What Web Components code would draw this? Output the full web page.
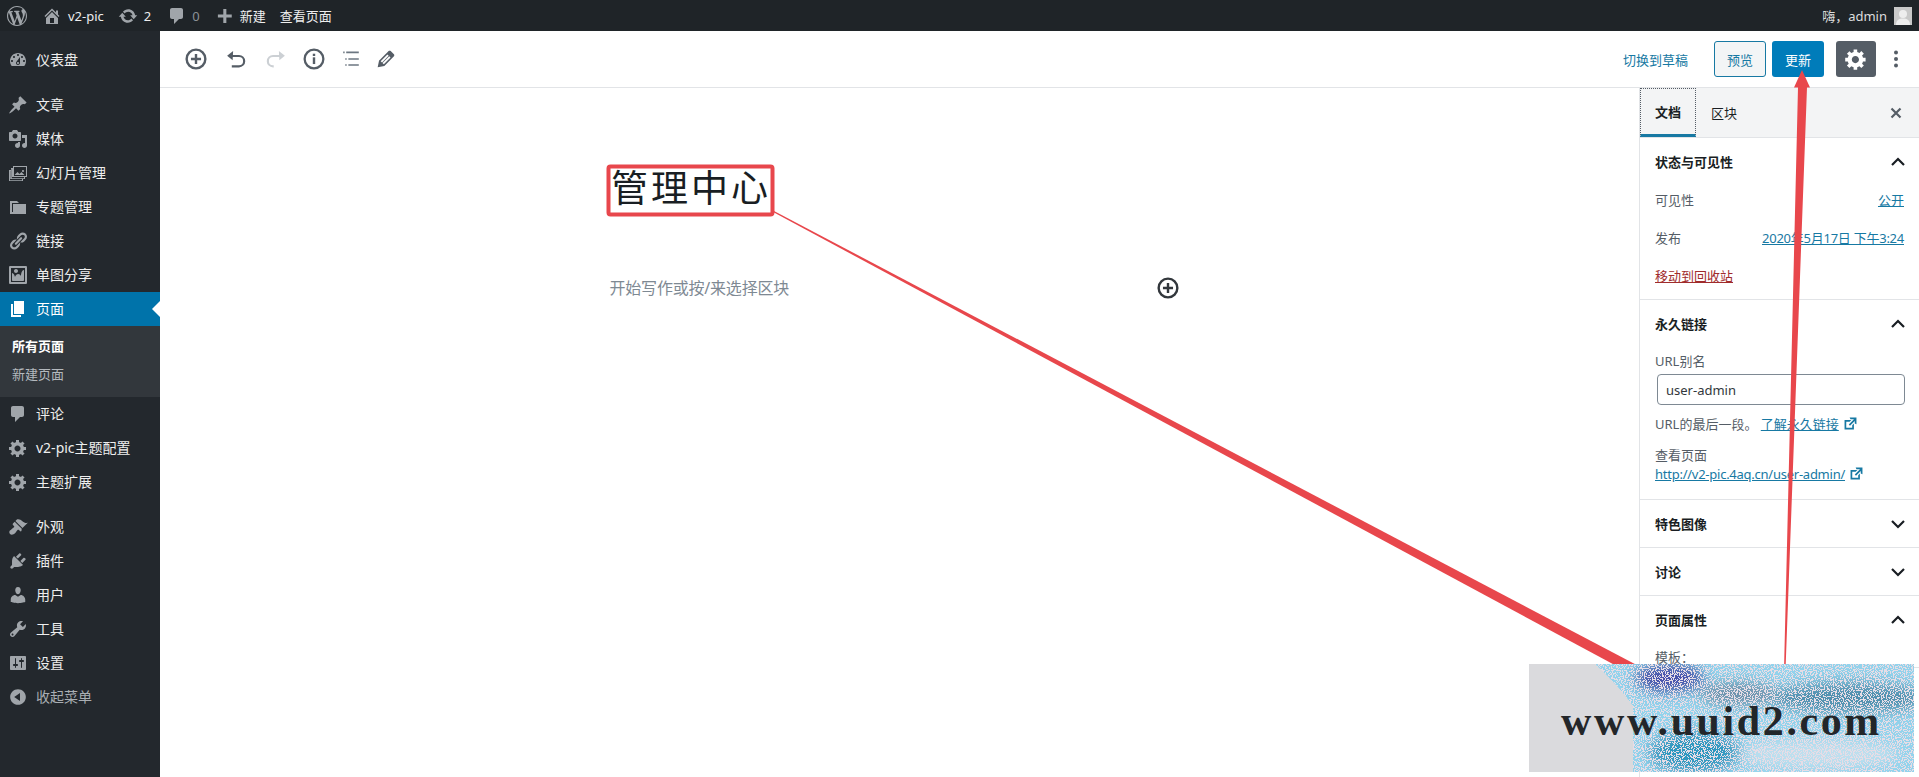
<!DOCTYPE html>
<html lang="zh-CN">
<head>
<meta charset="utf-8">
<title>编辑页面</title>
<style>
  html, body { margin: 0; height: 100%; overflow: hidden; background: #fff; }
  body {
    position: relative;
    display: flex;
    flex-direction: column;
    font: 13px "Noto Sans", "Noto Sans CJK SC", sans-serif;
  }
  .workspace { flex: 1; display: flex; min-height: 0; }
</style>
</head>
<body>
<wp-admin-bar></wp-admin-bar>
<div class="workspace">
  <wp-admin-menu></wp-admin-menu>
  <wp-editor></wp-editor>
</div>
<note-arrows></note-arrows>
<water-stamp></water-stamp>

<script>
const ICONS = {
  logo: '<path fill-rule="evenodd" d="M20 10c0-5.51-4.49-10-10-10C4.48 0 0 4.49 0 10c0 5.52 4.48 10 10 10 5.51 0 10-4.48 10-10zM7.78 15.37L4.37 6.22c.55-.02 1.17-.08 1.17-.08.5-.06.44-1.13-.06-1.11 0 0-1.45.11-2.37.11-.18 0-.37 0-.58-.01C4.12 2.69 6.87 1.02 10 1.02c2.33 0 4.45.87 6.05 2.34-.68-.11-1.65.39-1.65 1.58 0 .74.45 1.36.9 2.1.35.61.55 1.36.55 2.46 0 1.49-1.4 5-1.4 5l-3.03-8.37c.54-.02.82-.17.82-.17.5-.05.44-1.25-.06-1.22 0 0-1.44.12-2.38.12-.87 0-2.33-.12-2.33-.12-.5-.03-.56 1.2-.06 1.22l.92.08 1.26 3.41zM17.41 10c.24-.64.74-1.87.43-4.25.7 1.29 1.05 2.71 1.05 4.25 0 3.29-1.73 6.24-4.4 7.78.97-2.59 1.94-5.2 2.92-7.78zM6.1 18.09C3.12 16.65 1.11 13.53 1.11 10c0-1.3.23-2.48.72-3.59C3.25 10.3 4.67 14.2 6.1 18.09zm4.03-6.63l2.58 6.98c-.86.29-1.76.45-2.71.45-.79 0-1.57-.11-2.29-.33.81-2.38 1.62-4.74 2.42-7.1z"/>',
  home: '<path fill-rule="evenodd" d="M16 8.5l1.53 1.53-1.06 1.06L10 4.62l-6.47 6.47-1.06-1.06L10 2.5l4 4v-2h2v4zm-6-2.46l6 5.99V18H4v-5.97zM12 17v-5H8v5h4z"/>',
  update: '<path d="M10.2 3.28c3.53 0 6.43 2.61 6.92 6h2.08l-3.5 4-3.5-4h2.32c-.45-1.97-2.21-3.45-4.32-3.45-1.45 0-2.73.71-3.54 1.78L4.95 5.66C6.23 4.2 8.11 3.28 10.2 3.28zm-.4 13.44c-3.52 0-6.43-2.61-6.92-6H.8l3.5-4c1.17 1.33 2.33 2.67 3.5 4H5.48c.45 1.97 2.21 3.45 4.32 3.45 1.45 0 2.73-.71 3.54-1.78l1.71 1.95c-1.28 1.46-3.15 2.38-5.25 2.38z"/>',
  comment: '<path d="M5 2h9c1.1 0 2 .9 2 2v7c0 1.1-.9 2-2 2h-2l-5 5v-5H5c-1.1 0-2-.9-2-2V4c0-1.1.9-2 2-2z"/>',
  plus: '<path d="M17.500 8.300v3.400h-6v6h-3.400v-6h-6V8.300h6v-6h3.400v6z"/>',
  dashboard: '<path fill-rule="evenodd" d="M3.76 16h12.48c1.1-1.37 1.76-3.11 1.76-5 0-4.42-3.58-8-8-8s-8 3.58-8 8c0 1.89.66 3.63 1.76 5zM10 4c.55 0 1 .45 1 1s-.45 1-1 1-1-.45-1-1 .45-1 1-1zM6 6c.55 0 1 .45 1 1s-.45 1-1 1-1-.45-1-1 .45-1 1-1zm8 0c.55 0 1 .45 1 1s-.45 1-1 1-1-.45-1-1 .45-1 1-1zm-5.37 5.55L12 7v6c0 1.1-.9 2-2 2s-2-.9-2-2c0-.57.24-1.08.63-1.45zM4 10c.55 0 1 .45 1 1s-.45 1-1 1-1-.45-1-1 .45-1 1-1zm12 0c.55 0 1 .45 1 1s-.45 1-1 1-1-.45-1-1 .45-1 1-1zm-5 3c0-.55-.45-1-1-1s-1 .45-1 1 .45 1 1 1 1-.45 1-1z"/>',
  pin: '<path d="M10.44 3.02l1.82-1.82 6.36 6.35-1.83 1.82c-1.05-.68-2.48-.57-3.41.36l-.75.75c-.92.93-1.04 2.35-.35 3.41l-1.83 1.82-2.41-2.41-2.8 2.79c-.42.42-3.38 2.71-3.8 2.29s1.86-3.39 2.28-3.81l2.79-2.79L4.1 9.36l1.83-1.82c1.05.69 2.48.57 3.4-.36l.75-.75c.93-.92 1.05-2.35.36-3.41z"/>',
  media: '<path fill-rule="evenodd" d="M13 11V4c0-.55-.45-1-1-1h-1.67L9 1H5L3.67 3H2c-.55 0-1 .45-1 1v7c0 .55.45 1 1 1h10c.55 0 1-.45 1-1zM7 4.5c1.38 0 2.5 1.12 2.5 2.5S8.38 9.5 7 9.5 4.5 8.38 4.5 7 5.62 4.5 7 4.5zM14 6h5v10.5c0 1.38-1.12 2.5-2.5 2.5S14 17.88 14 16.5s1.12-2.5 2.5-2.5c.17 0 .34.02.5.05V9h-3V6zm-4 8.05V13h2v3.5c0 1.38-1.12 2.5-2.5 2.5S7 17.88 7 16.5 8.12 14 9.5 14c.17 0 .34.02.5.05z"/>',
  slides: '<path fill-rule="evenodd" d="M5 3h14v11h-2v2h-2v2H1V7h2V5h2V3zm13 10V4H6v9h12zm-3-4c-.55 0-1-.45-1-1s.45-1 1-1 1 .45 1 1-.45 1-1 1zm1.500 3l-3-3-2 2-2-2-3 3zM16 14H4V6H3.800v9.200H16zm-2 2H2.200V8H2v9.200h12z"/>',
  folder: '<path d="M5 7h13v10H2V4h7l2 2H4v9h1V7z"/>',
  link: '<path d="M17.74 2.76c1.68 1.69 1.68 4.41 0 6.1l-1.53 1.52c-1.12 1.12-2.7 1.47-4.14 1.09l2.62-2.61.76-.77.76-.76c.84-.84.84-2.2 0-3.04-.84-.85-2.2-.85-3.04 0l-.77.76-3.38 3.38c-.37-1.44-.02-3.02 1.1-4.14l1.52-1.53c1.69-1.68 4.42-1.68 6.1 0zM8.59 13.43l5.34-5.34c.42-.42.42-1.1 0-1.52-.44-.43-1.13-.39-1.53 0l-5.33 5.34c-.42.42-.42 1.1 0 1.52.44.43 1.13.39 1.52 0zm-.76 2.29l4.14-4.15c.38 1.44.03 3.02-1.09 4.14l-1.52 1.53c-1.69 1.68-4.41 1.68-6.1 0-1.68-1.68-1.68-4.42 0-6.1l1.53-1.52c1.12-1.12 2.7-1.47 4.14-1.1l-4.14 4.15c-.85.84-.85 2.2 0 3.05.84.84 2.2.84 3.04 0z"/>',
  image: '<path fill-rule="evenodd" d="M2.25 1h15.5c.69 0 1.25.56 1.25 1.25v15.5c0 .69-.56 1.25-1.25 1.25H2.25C1.56 19 1 18.44 1 17.75V2.25C1 1.56 1.56 1 2.25 1zM17 17V3H3v14h14zM10 6c0-1.1-.9-2-2-2s-2 .9-2 2 .9 2 2 2 2-.9 2-2zm3 5s0-6 3-6v10c0 .55-.45 1-1 1H5c-.55 0-1-.45-1-1V8c2 0 3 4 3 4s1-3 3-3 3 2 3 2z"/>',
  page: '<path d="M6 15V2h10v13H6zm-1 1h8v2H3V5h2v11z"/>',
  gear: '<path fill-rule="evenodd" d="M18 12h-2.18c-.17.7-.44 1.35-.81 1.93l1.54 1.54-2.1 2.1-1.54-1.54c-.58.36-1.23.63-1.91.79V19H8v-2.18c-.68-.16-1.33-.43-1.91-.79l-1.54 1.54-2.12-2.12 1.54-1.54c-.36-.58-.63-1.23-.79-1.91H1V9.03h2.17c.16-.7.44-1.35.8-1.94L2.43 5.55l2.1-2.1 1.54 1.54c.58-.37 1.24-.64 1.93-.81V2h3v2.18c.68.16 1.33.43 1.91.79l1.54-1.54 2.12 2.12-1.54 1.54c.36.59.64 1.24.8 1.94H18V12zm-8.5 1.5c1.66 0 3-1.34 3-3s-1.34-3-3-3-3 1.34-3 3 1.34 3 3 3z"/>',
  brush: '<path d="M14.48 11.06L7.41 3.99l1.5-1.5c.5-.56 2.3-.47 3.51.32 1.21.8 1.43 1.28 2.91 2.1 1.18.64 2.45 1.26 4.45.85zm-.71.71L6.7 4.7 4.93 6.47c-.39.39-.39 1.02 0 1.41l1.06 1.06c.39.39.39 1.03 0 1.42-.6.6-1.43 1.11-2.21 1.69-.35.26-.7.53-1.01.84C1.43 13.23.64 15.41 2 17c1.36 1.36 3.7.57 5.02-.75.31-.31.58-.66.84-1.01.58-.78 1.09-1.61 1.69-2.21.39-.39 1.03-.39 1.42 0l1.06 1.06c.39.39 1.02.39 1.41 0z"/>',
  plug: '<path d="M13.11 4.36L9.87 7.6 8 5.73l3.24-3.24c.35-.34 1.05-.2 1.56.32.52.51.66 1.21.31 1.55zm-8 1.77l.91-1.12 9.01 9.01-1.19.84c-.71.71-2.63 1.16-3.82 1.16H6.14L4.9 17.26c-.59.59-1.54.59-2.12 0-.59-.58-.59-1.53 0-2.12l1.24-1.24v-3.88c0-1.13.4-3.19 1.09-3.89zm7.26 3.97l3.24-3.24c.34-.35 1.04-.21 1.55.31.52.51.66 1.21.31 1.55l-3.24 3.25z"/>',
  user: '<path d="M10 9.25c-2.27 0-2.73-3.44-2.73-3.44C7 4.02 7.82 2 9.97 2c2.16 0 2.98 2.02 2.71 3.81 0 0-.41 3.44-2.68 3.44zm0 2.57L12.72 10c2.39 0 4.52 2.33 4.52 4.53v2.49s-3.65 1.13-7.24 1.13c-3.65 0-7.24-1.13-7.24-1.13v-2.49c0-2.25 1.94-4.48 4.47-4.48z"/>',
  tool: '<path fill-rule="evenodd" d="M16.68 9.77c-1.34 1.34-3.3 1.67-4.95.99l-5.41 6.52c-.99.99-2.59.99-3.58 0s-.99-2.59 0-3.57l6.52-5.42c-.68-1.65-.35-3.61.99-4.95 1.28-1.28 3.12-1.62 4.72-1.06l-2.89 2.89 2.82 2.82 2.86-2.87c.53 1.58.18 3.39-1.08 4.65zM3.81 16.21c.4.39 1.04.39 1.43 0 .4-.4.4-1.04 0-1.43-.39-.4-1.03-.4-1.43 0-.39.39-.39 1.03 0 1.43z"/>',
  sliders: '<path fill-rule="evenodd" d="M18 16V4c0-.55-.45-1-1-1H3c-.55 0-1 .45-1 1v12c0 .55.45 1 1 1h14c.55 0 1-.45 1-1zM8 11h1c.55 0 1 .45 1 1s-.45 1-1 1H8v1.5c0 .28-.22.5-.5.5s-.5-.22-.5-.5V13H6c-.55 0-1-.45-1-1s.45-1 1-1h1V5.5c0-.28.22-.5.5-.5s.5.22.5.5V11zm5-2h-1c-.55 0-1-.45-1-1s.45-1 1-1h1V5.5c0-.28.22-.5.5-.5s.5.22.5.5V7h1c.55 0 1 .45 1 1s-.45 1-1 1h-1v5.5c0 .28-.22.5-.5.5s-.5-.22-.5-.5V9z"/>',
  collapse: '<path fill-rule="evenodd" d="M10 2.16c4.33 0 7.84 3.51 7.84 7.84s-3.51 7.84-7.84 7.84S2.16 14.33 2.16 10 5.71 2.16 10 2.16zm2 11.72V6.12L6.18 9.97z"/>',
  external: '<path d="M9 3h8v8l-2-1V6.92l-5.6 5.59-1.41-1.41L14.08 5H10zm3 12v-3l2-2v7H3V6h8L9 8H5v7h7z"/>',
  edit: '<path fill-rule="evenodd" d="M13.89 3.39l2.71 2.72c.46.46.42 1.24.03 1.64l-8.01 8.02-5.56 1.16 1.16-5.58s7.6-7.63 7.99-8.03c.39-.39 1.22-.39 1.68.07zm-2.73 2.79l-5.59 5.61 1.11 1.11 5.54-5.65zm-2.97 8.23l5.58-5.6-1.07-1.08-5.59 5.6z"/>',
  add: '<circle cx="10" cy="10" r="7.800" fill="none" stroke="currentColor" stroke-width="2"/><path d="M10 5.800v8.400M5.800 10h8.400" stroke="currentColor" stroke-width="2" fill="none"/>',
  info: '<circle cx="10" cy="10" r="7.800" fill="none" stroke="currentColor" stroke-width="1.900"/><rect x="9" y="8.600" width="2" height="5.600"/><rect x="9" y="5.600" width="2" height="1.900"/>',
  undo: '<path d="M6 7.500h6.500a4.300 4.300 0 0 1 0 8.600H6.500" fill="none" stroke="currentColor" stroke-width="1.800"/><path d="M2.600 7.300l5-3.900-.4 7.700z"/>',
  redo: '<path d="M14 7.500H7.500a4.300 4.300 0 0 0 0 8.600h.6" fill="none" stroke="currentColor" stroke-width="1.800"/><path d="M17.400 7.300l-5-3.900.4 7.700z"/>',
  outline: '<path d="M3.500 4.500h1.200M6 4.500h10.500M5.200 10h1.200M7.800 10h8.700M5.200 15h1.200M7.800 15h8.700" fill="none" stroke="currentColor" stroke-width="1.300"/>',
  close: '<path d="M5.500 5.500l9 9M14.500 5.500l-9 9" fill="none" stroke="currentColor" stroke-width="2.200"/>',
  up: '<path d="M4 13l6-6 6 6" fill="none" stroke="currentColor" stroke-width="2.200"/>',
  down: '<path d="M4 7l6 6 6-6" fill="none" stroke="currentColor" stroke-width="2.200"/>',
  kebab: '<circle cx="10" cy="3.500" r="2"/><circle cx="10" cy="10" r="2"/><circle cx="10" cy="16.500" r="2"/>'
};

class WpIcon extends HTMLElement {
  connectedCallback() {
    const size = this.getAttribute('size') || 20;
    this.attachShadow({mode: 'open'}).innerHTML = `
      <style>
        :host { display: inline-flex; width: ${size}px; height: ${size}px; flex: none; color: inherit; }
        svg { width: 100%; height: 100%; fill: currentColor; display: block; }
      </style>
      <svg viewBox="0 0 20 20" aria-hidden="true">${ICONS[this.getAttribute('name')] || ''}</svg>`;
  }
}
customElements.define('wp-icon', WpIcon);

class WpAdminBar extends HTMLElement {
  connectedCallback() {
    this.attachShadow({mode: 'open'}).innerHTML = `
      <style>
        :host {
          display: flex;
          align-items: center;
          height: 31px;
          flex: none;
          background: #1f2428;
          color: #eee;
          font-size: 13px;
        }
        .item { display: flex; align-items: center; white-space: nowrap; }
        wp-icon { color: #a0a5aa; }
        .muted { color: #8c9196; }
        .right { margin-left: auto; padding-right: 7px; gap: 7px; color: #ddd; }
        .avatar { display: block; width: 18px; height: 18px; }
      </style>
      <div class="item" style="margin-left:7px"><wp-icon name="logo"></wp-icon></div>
      <div class="item" style="margin-left:15px"><wp-icon name="home" size="20"></wp-icon><span style="margin-left:6px">v2-pic</span></div>
      <div class="item" style="margin-left:14px"><wp-icon name="update"></wp-icon><span style="margin-left:6px">2</span></div>
      <div class="item" style="margin-left:16px"><wp-icon name="comment"></wp-icon><span class="muted" style="margin-left:5px">0</span></div>
      <div class="item" style="margin-left:16px"><wp-icon name="plus" size="18"></wp-icon><span style="margin-left:6px">新建</span></div>
      <div class="item" style="margin-left:14px">查看页面</div>
      <div class="item right">
        <span>嗨，admin</span>
        <svg class="avatar" viewBox="0 0 18 18"><rect width="18" height="18" fill="#c9c9c9"/><circle cx="9" cy="7" r="4" fill="#eee"/><path d="M2 18c0-5 3-6.500 7-6.500s7 1.500 7 6.500z" fill="#eee"/></svg>
      </div>`;
  }
}
customElements.define('wp-admin-bar', WpAdminBar);

class WpMenuItem extends HTMLElement {
  connectedCallback() {
    this.attachShadow({mode: 'open'}).innerHTML = `
      <style>
        :host {
          display: flex;
          align-items: center;
          position: relative;
          height: 34px;
          padding-left: 8px;
          gap: 8px;
          color: #eee;
          font-size: 14px;
          white-space: nowrap;
        }
        :host([active]) { background: #0073aa; color: #fff; }
        :host([active])::after {
          content: "";
          position: absolute;
          right: 0;
          top: 9px;
          border: 8px solid transparent;
          border-right-color: #fff;
          border-left-width: 0;
        }
        :host([dim]) { color: #a9aeb3; }
        .label { padding-bottom: 2px; }
        wp-icon { color: #a0a5aa; }
        :host([active]) wp-icon { color: #fff; }
      </style>
      <wp-icon name="${this.getAttribute('icon')}"></wp-icon><span class="label"><slot></slot></span>`;
  }
}
customElements.define('wp-menu-item', WpMenuItem);

class WpAdminMenu extends HTMLElement {
  connectedCallback() {
    this.attachShadow({mode: 'open'}).innerHTML = `
      <style>
        :host {
          display: block;
          width: 160px;
          flex: none;
          padding-top: 12px;
          box-sizing: border-box;
          background: #23282d;
        }
        .gap { height: 11px; }
        .sub {
          display: flex;
          flex-direction: column;
          justify-content: center;
          box-sizing: border-box;
          height: 71px;
          padding: 0 0 3px 12px;
          background: #32373c;
          color: #b4b9be;
          font-size: 13px;
          line-height: 28px;
        }
        .sub b { color: #fff; font-weight: 700; }
      </style>
      <wp-menu-item icon="dashboard">仪表盘</wp-menu-item>
      <div class="gap"></div>
      <wp-menu-item icon="pin">文章</wp-menu-item>
      <wp-menu-item icon="media">媒体</wp-menu-item>
      <wp-menu-item icon="slides">幻灯片管理</wp-menu-item>
      <wp-menu-item icon="folder">专题管理</wp-menu-item>
      <wp-menu-item icon="link">链接</wp-menu-item>
      <wp-menu-item icon="image">单图分享</wp-menu-item>
      <wp-menu-item icon="page" active>页面</wp-menu-item>
      <div class="sub"><b>所有页面</b><span>新建页面</span></div>
      <wp-menu-item icon="comment">评论</wp-menu-item>
      <wp-menu-item icon="gear">v2-pic主题配置</wp-menu-item>
      <wp-menu-item icon="gear">主题扩展</wp-menu-item>
      <div class="gap"></div>
      <wp-menu-item icon="brush">外观</wp-menu-item>
      <wp-menu-item icon="plug">插件</wp-menu-item>
      <wp-menu-item icon="user">用户</wp-menu-item>
      <wp-menu-item icon="tool">工具</wp-menu-item>
      <wp-menu-item icon="sliders">设置</wp-menu-item>
      <wp-menu-item icon="collapse" dim>收起菜单</wp-menu-item>`;
  }
}
customElements.define('wp-admin-menu', WpAdminMenu);

class EditToolbar extends HTMLElement {
  connectedCallback() {
    this.attachShadow({mode: 'open'}).innerHTML = `
      <style>
        :host {
          display: flex;
          align-items: center;
          flex: none;
          height: 56px;
          padding-left: 24px;
          border-bottom: 1px solid #e2e4e7;
          background: #fff;
          color: #555d66;
          font-size: 13px;
        }
        .tools { display: flex; align-items: center; }
        .end { margin-left: auto; display: flex; align-items: center; }
        .draft { color: #1779a3; margin-right: 26px; }
        .btn {
          display: flex;
          align-items: center;
          justify-content: center;
          box-sizing: border-box;
          width: 52px;
          height: 36px;
          border-radius: 3px;
        }
        .preview { border: 1px solid #1779a3; background: #f3f5f6; color: #1779a3; margin-right: 6px; }
        .update { background: #007cba; color: #fff; margin-right: 12px; }
        .cog { width: 40px; background: #555d66; color: #fff; margin-right: 10px; }
        .more { margin-right: 13px; color: #555d66; }
      </style>
      <div class="tools">
        <wp-icon name="add" size="24"></wp-icon>
        <wp-icon name="undo" size="24" style="margin-left:16px"></wp-icon>
        <wp-icon name="redo" size="24" style="margin-left:16px;color:#ccd0d4"></wp-icon>
        <wp-icon name="info" size="24" style="margin-left:14px"></wp-icon>
        <wp-icon name="outline" size="24" style="margin-left:13px;color:#6c7781"></wp-icon>
        <wp-icon name="edit" size="24" style="margin-left:11px"></wp-icon>
      </div>
      <div class="end">
        <span class="draft">切换到草稿</span>
        <div class="btn preview">预览</div>
        <div class="btn update">更新</div>
        <div class="btn cog"><wp-icon name="gear" size="24"></wp-icon></div>
        <wp-icon class="more" name="kebab" size="20"></wp-icon>
      </div>`;
  }
}
customElements.define('edit-toolbar', EditToolbar);

class SidePanel extends HTMLElement {
  connectedCallback() {
    const open = this.hasAttribute('open');
    this.attachShadow({mode: 'open'}).innerHTML = `
      <style>
        :host { display: block; border-bottom: 1px solid #e2e4e7; }
        header {
          display: flex;
          align-items: center;
          justify-content: space-between;
          height: 47px;
          padding: 0 11px 0 15px;
          font-weight: 700;
          color: #191e23;
        }
        wp-icon { color: #191e23; }
        .body { display: ${open ? 'block' : 'none'}; padding: 0 15px; }
      </style>
      <header>${this.getAttribute('heading')}<wp-icon name="${open ? 'up' : 'down'}"></wp-icon></header>
      <div class="body"><slot></slot></div>`;
  }
}
customElements.define('side-panel', SidePanel);

class DocSidebar extends HTMLElement {
  connectedCallback() {
    this.attachShadow({mode: 'open'}).innerHTML = `
      <style>
        :host {
          display: block;
          width: 280px;
          flex: none;
          box-sizing: border-box;
          border-left: 1px solid #e2e4e7;
          background: #fff;
          color: #555d66;
          font-size: 13px;
          overflow: hidden;
        }
        .tabs {
          display: flex;
          align-items: stretch;
          height: 49px;
          border-bottom: 1px solid #e2e4e7;
          background: #f3f4f5;
          color: #191e23;
        }
        .tab { display: flex; align-items: center; padding: 0 15px; }
        .tab.on {
          box-sizing: border-box;
          padding: 0 14px;
          border: 1px dotted #555d66;
          border-bottom: 3px solid #1779a3;
          font-weight: 700;
        }
        .x { margin: auto 13px auto auto; color: #555d66; }
        a { color: #1779a3; text-decoration: underline; }
        .row { display: flex; justify-content: space-between; align-items: center; height: 28px; margin-bottom: 10px; }
        .date { letter-spacing: -.25px; }
        .trash { color: #a02c2c; }
        .label { line-height: 20px; margin-top: 4px; }
        .slug {
          box-sizing: border-box;
          height: 31px;
          margin: 3px 0 0 2px;
          width: 248px;
          padding: 0 8px;
          display: flex;
          align-items: center;
          border: 1px solid #7e8993;
          border-radius: 4px;
          color: #32373c;
        }
        .help { line-height: 20px; margin-top: 9px; }
        .view { line-height: 18px; margin-top: 12px; }
        .url { line-height: 20px; padding-bottom: 15px; white-space: nowrap; }
        .url a { letter-spacing: -.25px; }
        wp-icon { vertical-align: -3px; color: #1779a3; }
      </style>
      <div class="tabs">
        <div class="tab on">文档</div>
        <div class="tab">区块</div>
        <wp-icon class="x" name="close"></wp-icon>
      </div>
      <side-panel heading="状态与可见性" open>
        <div class="row">可见性<a>公开</a></div>
        <div class="row">发布<a class="date">2020年5月17日 下午3:24</a></div>
        <div class="row"><a class="trash">移动到回收站</a></div>
      </side-panel>
      <side-panel heading="永久链接" open>
        <div class="label">URL别名</div>
        <div class="slug">user-admin</div>
        <div class="help">URL的最后一段。 <a>了解永久链接</a> <wp-icon name="external" size="17"></wp-icon></div>
        <div class="view">查看页面</div>
        <div class="url"><a>http://v2-pic.4aq.cn/user-admin/</a> <wp-icon name="external" size="17"></wp-icon></div>
      </side-panel>
      <side-panel heading="特色图像"></side-panel>
      <side-panel heading="讨论"></side-panel>
      <side-panel heading="页面属性" open>
        <div class="label">模板：</div>
      </side-panel>`;
  }
}
customElements.define('doc-sidebar', DocSidebar);

class WpEditor extends HTMLElement {
  connectedCallback() {
    this.attachShadow({mode: 'open'}).innerHTML = `
      <style>
        :host { flex: 1; min-width: 0; display: flex; flex-direction: column; background: #fff; }
        .row { flex: 1; display: flex; min-height: 0; }
        main { flex: 1; min-width: 0; }
        .col { width: 580px; margin: 0 auto; padding-top: 77px; }
        h1 {
          margin: 0 0 0 1px;
          font: 400 37px/50px "Liberation Serif", serif;
          letter-spacing: 3px;
          color: #191e23;
        }
        .blank {
          display: flex;
          align-items: center;
          justify-content: space-between;
          margin-top: 60px;
          padding-right: 10px;
          height: 24px;
          font-size: 16px;
          letter-spacing: -.2px;
          color: #7e8993;
        }
        wp-icon { color: #32373c; margin-top: 2px; }
      </style>
      <edit-toolbar></edit-toolbar>
      <div class="row">
        <main>
          <div class="col">
            <h1>管理中心</h1>
            <div class="blank">开始写作或按/来选择区块<wp-icon name="add" size="24"></wp-icon></div>
          </div>
        </main>
        <doc-sidebar></doc-sidebar>
      </div>`;
  }
}
customElements.define('wp-editor', WpEditor);

class NoteArrows extends HTMLElement {
  connectedCallback() {
    this.attachShadow({mode: 'open'}).innerHTML = `
      <style>
        :host { position: absolute; left: 0; top: 0; width: 1919px; height: 777px; pointer-events: none; }
        svg { display: block; }
      </style>
      <svg width="1919" height="777" viewBox="0 0 1919 777" fill="#e8474c">
        <rect x="608.500" y="166.500" width="164" height="48" rx="2" fill="none" stroke="#e8474c" stroke-width="4"/>
        <polygon points="774,211 1650,672 1650,684 774,212.500"/>
        <polygon points="1802,70 1810,87.500 1807,87.500 1785.500,670 1784,670 1798,87.500 1794,87.500"/>
      </svg>`;
  }
}
customElements.define('note-arrows', NoteArrows);

class WaterStamp extends HTMLElement {
  connectedCallback() {
    this.attachShadow({mode: 'open'}).innerHTML = `
      <style>
        :host {
          position: absolute;
          left: 1529px;
          top: 664px;
          width: 385px;
          height: 108px;
          display: flex;
          align-items: center;
          justify-content: center;
          background: #dadadd;
          overflow: hidden;
        }
        svg { position: absolute; inset: 0; }
        span {
          position: relative;
          margin-top: 6px;
          font: 700 42px/1 "Liberation Serif", serif;
          letter-spacing: 2.600px;
          white-space: nowrap;
          color: #232629;
        }
      </style>
      <svg width="385" height="108" viewBox="0 0 385 108">
        <defs>
          <filter id="grain" x="0" y="0" width="100%" height="100%" color-interpolation-filters="sRGB">
            <feTurbulence type="fractalNoise" baseFrequency="0.9" numOctaves="1" seed="4" result="n"/>
            <feColorMatrix in="n" type="matrix" values="0 0 0 0 0  0 0 0 0 0  0 0 0 0 0  8 0 0 0 -3.300" result="a"/>
            <feComponentTransfer in="a" result="hard"><feFuncA type="discrete" tableValues="0 1"/></feComponentTransfer>
            <feComposite in="SourceGraphic" in2="hard" operator="in"/>
          </filter>
          <filter id="soft"><feGaussianBlur stdDeviation="7"/></filter>
          <clipPath id="area"><path d="M66 0H385V108H104V42Q90 22 66 0z"/></clipPath>
        </defs>
        <g clip-path="url(#area)">
          <rect width="385" height="108" fill="#e6dde6"/>
          <g filter="url(#grain)">
            <g filter="url(#soft)">
              <rect x="60" y="-20" width="345" height="150" fill="#93d3ec"/>
              <ellipse cx="320" cy="34" rx="80" ry="16" fill="#4f8fae"/>
              <ellipse cx="140" cy="14" rx="36" ry="16" fill="#4650ac"/>
              <ellipse cx="165" cy="88" rx="46" ry="22" fill="#2f98c0"/>
              <ellipse cx="210" cy="30" rx="40" ry="12" fill="#6d8fa8"/>
              <ellipse cx="290" cy="90" rx="80" ry="14" fill="#bfe0ee"/>
            </g>
          </g>
        </g>
      </svg>
      <span>www.uuid2.com</span>`;
  }
}
customElements.define('water-stamp', WaterStamp);
</script>
</body>
</html>
